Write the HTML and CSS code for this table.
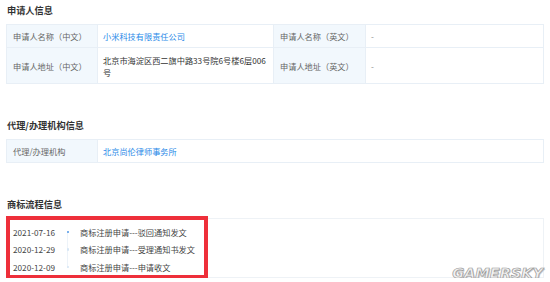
FILE: index.html
```html
<!DOCTYPE html>
<html lang="zh-CN">
<head>
<meta charset="utf-8">
<title>商标信息</title>
<link rel="stylesheet" href="styles.css">
</head>
<body>
<div class="page">
  <section class="section">
    <h2 class="title">申请人信息</h2>
    <div class="grid grid-4">
      <div class="cell label">申请人名称（中文）</div>
      <div class="cell value link">小米科技有限责任公司</div>
      <div class="cell label">申请人名称（英文）</div>
      <div class="cell value muted">-</div>
      <div class="cell label tall">申请人地址（中文）</div>
      <div class="cell value tall">北京市海淀区西二旗中路33号院6号楼6层006号</div>
      <div class="cell label tall">申请人地址（英文）</div>
      <div class="cell value muted tall">-</div>
    </div>
  </section>

  <section class="section">
    <h2 class="title">代理/办理机构信息</h2>
    <div class="grid grid-2">
      <div class="cell label">代理/办理机构</div>
      <div class="cell value link">北京尚伦律师事务所</div>
    </div>
  </section>

  <section class="section last">
    <h2 class="title">商标流程信息</h2>
    <div class="flow">
      <div class="flow-row">
        <span class="date">2021-07-16</span>
        <span class="dot dot-active"></span>
        <span class="step">商标注册申请---驳回通知发文</span>
      </div>
      <div class="flow-row">
        <span class="date">2020-12-29</span>
        <span class="dot"></span>
        <span class="step">商标注册申请---受理通知书发文</span>
      </div>
      <div class="flow-row">
        <span class="date">2020-12-09</span>
        <span class="dot dot-last"></span>
        <span class="step">商标注册申请---申请收文</span>
      </div>
      <div class="highlight"></div>
      <div class="watermark">GAMERSKY</div>
    </div>
  </section>
</div>
</body>
</html>
```

FILE: styles.css
```css
* { box-sizing: border-box; }

html, body {
  margin: 0;
  padding: 0;
  background: #ffffff;
}

body {
  font-family: "Noto Sans CJK SC", "Liberation Sans", sans-serif;
  font-size: 8.2px;
  color: #333333;
}

.page {
  width: 550px;
  padding: 3px 6px 0 6px;
}

.section {
  margin-bottom: 34px;
}

.section.last {
  margin-bottom: 0;
}

.title {
  margin: 0 0 7px 1px;
  font-size: 9.2px;
  line-height: 14px;
  font-weight: bold;
  color: #333333;
}

.grid {
  display: grid;
  border-top: 1px solid #e8eff6;
  border-left: 1px solid #e8eff6;
}

.grid-4 {
  grid-template-columns: 91px 176px 92px 1fr;
}

.grid-2 {
  grid-template-columns: 91px 1fr;
}

.cell {
  border-right: 1px solid #e8eff6;
  border-bottom: 1px solid #e8eff6;
  height: 23px;
  display: flex;
  align-items: center;
  line-height: 12px;
}

.cell.tall {
  height: 36px;
}

.label {
  background: #f2f8fd;
  color: #666666;
  padding-left: 6px;
}

.value {
  padding: 0 5px;
  color: #333333;
}

.link {
  color: #2a8ae8;
}

.muted {
  color: #888888;
}

.flow {
  position: relative;
  height: 60px;
  border: 1px solid #eef2f6;
  padding-top: 4px;
}

.flow-row {
  display: flex;
  align-items: center;
  height: 17.5px;
  line-height: 12px;
}

.date {
  width: 55px;
  padding-left: 6px;
  color: #444444;
}

.dot {
  position: relative;
  width: 12px;
  height: 17.5px;
  flex: none;
}

.dot::before {
  content: "";
  position: absolute;
  left: 5px;
  top: 0;
  bottom: 0;
  width: 1px;
  background: #edf3f9;
}

.dot::after {
  content: "";
  position: absolute;
  left: 4.5px;
  top: 7.5px;
  width: 2.5px;
  height: 2.5px;
  border-radius: 50%;
  background: #d6e6f5;
}

.dot-active::before { top: 9px; }
.dot-last::before { bottom: 8px; }

.dot-active::after {
  background: #4f97e6;
}

.step {
  padding-left: 6px;
  color: #444444;
}

.highlight {
  position: absolute;
  left: -1px;
  top: -3px;
  width: 202px;
  height: 63px;
  border: 4px solid #ee2f3a;
}

.watermark {
  position: absolute;
  right: 0;
  bottom: -4px;
  font-family: "DejaVu Sans", sans-serif;
  font-weight: bold;
  font-style: italic;
  font-size: 14.5px;
  line-height: 15px;
  color: #f2f2f2;
  -webkit-text-stroke: 0.7px #9a9a9a;
  text-shadow: 1px 1px 0 #c8c8c8;
}
```
